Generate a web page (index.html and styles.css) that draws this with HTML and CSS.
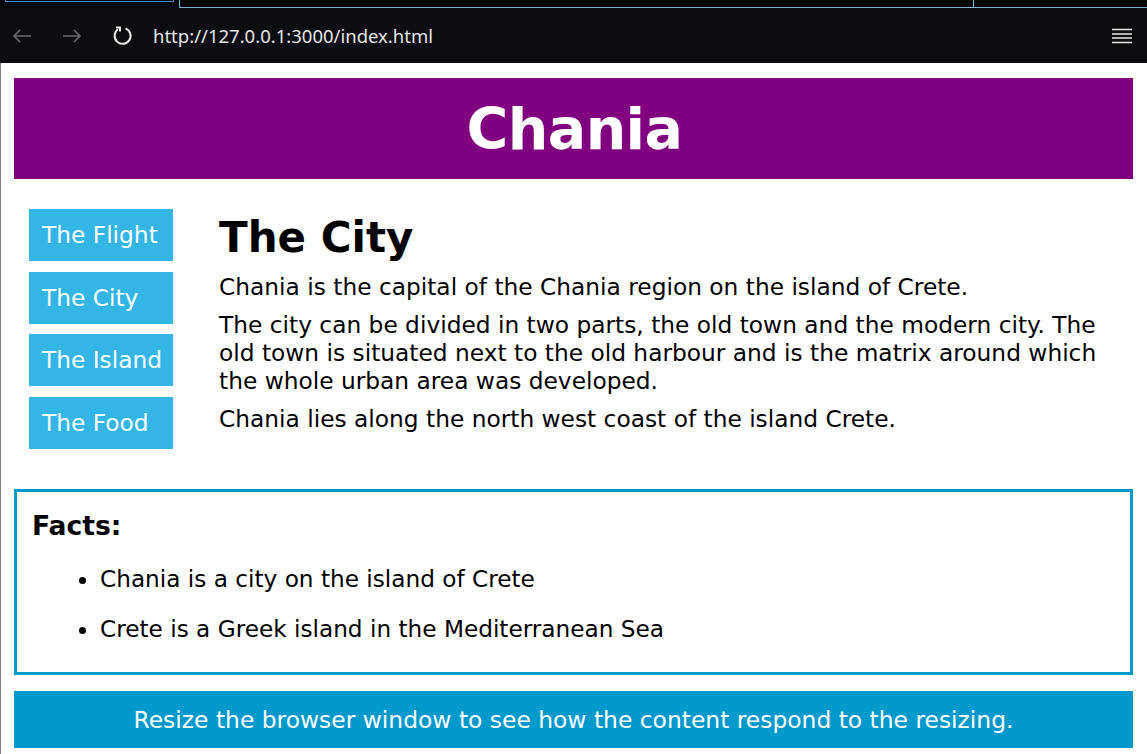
FILE: index.html
```html
<!DOCTYPE html>
<html lang="en">
<head>
<meta charset="utf-8">
<title>Chania</title>
<link rel="stylesheet" href="styles.css">
</head>
<body>
<div class="chrome">
  <div class="tabstrip">
    <div class="tab-active"></div>
    <div class="tab-gap"></div>
    <div class="tab-other"></div>
    <div class="tab-rest"></div>
  </div>
  <div class="toolbar">
    <span class="tb-btn">
      <svg width="20" height="14" viewBox="0 0 20 14"><path d="M19 7H2M8 1L2 7l6 6" fill="none" stroke="#6a6b6e" stroke-width="1.6"/></svg>
    </span>
    <span class="tb-btn">
      <svg width="20" height="14" viewBox="0 0 20 14"><path d="M1 7h17M12 1l6 6-6 6" fill="none" stroke="#6a6b6e" stroke-width="1.6"/></svg>
    </span>
    <span class="tb-btn">
      <svg width="21" height="20" viewBox="0 0 21 20"><path d="M6 3.3A8 8 0 1 0 13.5 2.4" fill="none" stroke="#e8e8e8" stroke-width="2"/><path d="M4 1.5h4v4" fill="none" stroke="#e8e8e8" stroke-width="2"/></svg>
    </span>
    <span class="url">http://127.0.0.1:3000/index.html</span>
    <span class="menu">
      <svg width="20" height="16" viewBox="0 0 20 16"><path d="M0 1.5h20M0 6h20M0 10h20M0 14.5h20" stroke="#e8e8e8" stroke-width="1.6"/></svg>
    </span>
  </div>
</div>
<div class="page">
  <div class="header"><h1>Chania</h1></div>
  <div class="row">
    <nav class="menu-col">
      <a class="nav-item">The Flight</a>
      <a class="nav-item">The City</a>
      <a class="nav-item">The Island</a>
      <a class="nav-item">The Food</a>
    </nav>
    <main class="main">
      <h2 class="title">The City</h2>
      <p>Chania is the capital of the Chania region on the island of Crete.</p>
      <p>The city can be divided in two parts, the old town and the modern city. The old town is situated next to the old harbour and is the matrix around which the whole urban area was developed.</p>
      <p>Chania lies along the north west coast of the island Crete.</p>
    </main>
  </div>
  <div class="facts">
    <h2>Facts:</h2>
    <ul>
      <li>Chania is a city on the island of Crete</li>
      <li>Crete is a Greek island in the Mediterranean Sea</li>
    </ul>
  </div>
  <div class="footer">Resize the browser window to see how the content respond to the resizing.</div>
</div>
</body>
</html>
```
FILE: styles.css
```css
* { box-sizing: border-box; }
html, body { margin: 0; padding: 0; background: #fff; }
body { font-family: "DejaVu Sans", sans-serif; width: 1147px; height: 754px; overflow: hidden; }

.chrome { background: #0c0d10; height: 63px; }
.tabstrip { display: flex; height: 8px; background: #030509; }
.tab-active { width: 169px; margin-left: 5px; height: 2px; border: 1px solid #4a8fd6; border-top: none; }
.tab-gap { width: 5px; }
.tab-other { width: 794px; border-left: 1px solid #7fb2d0; border-bottom: 1px solid #7fb2d0; }
.tab-rest { flex: 1; border-left: 1px solid #7fb2d0; border-bottom: 1px solid #7fb2d0; }

.toolbar { display: flex; align-items: center; height: 55px; padding-left: 12px; }
.tb-btn { width: 50px; display: flex; align-items: center; }
.tb-btn svg { display: block; }
.url { color: #e4e4e4; font-family: "Noto Sans", sans-serif; font-size: 18.5px; margin-left: -9px; }
.menu { margin-left: auto; margin-right: 15px; display: flex; }

.page { border-left: 1px solid #7f848b; padding: 15px 14px 0 13px; height: 691px; }
.header { background: #800080; height: 101px; display: flex; align-items: center; justify-content: center; }
.header h1 { margin: 0; color: #fff; font-size: 57px; letter-spacing: -0.6px; font-weight: 700; line-height: 1; position: relative; top: 1px; left: 1px; }

.row { display: flex; padding: 30px 0 0 15px; height: 310px; }
.menu-col { width: 144px; display: flex; flex-direction: column; gap: 10.7px; }
.nav-item { display: block; background: #33b5e5; color: #fff; height: 52px; line-height: 52px; padding-left: 13px; font-size: 23.3px; }
.main { padding: 0 10px 0 46px; flex: 1; }
.title { margin: 0 0 6px; font-size: 42px; font-weight: 700; line-height: 58px; }
.main p { margin: 0 0 10px; font-size: 23.3px; line-height: 28px; }

.facts { border: 3px solid #0099cc; height: 186px; padding: 14px 16px 14px 15px; }
.facts h2 { margin: 0; font-size: 26.6px; font-weight: 700; line-height: 40px; }
.facts ul { margin: 18px 0 0; padding-left: 68px; }
.facts li { font-size: 23.2px; line-height: 30px; margin-bottom: 20px; }

.footer { margin-top: 16px; background: #0099cc; color: #fff; height: 57px; display: flex; align-items: center; justify-content: center; font-size: 23.4px; }
```
